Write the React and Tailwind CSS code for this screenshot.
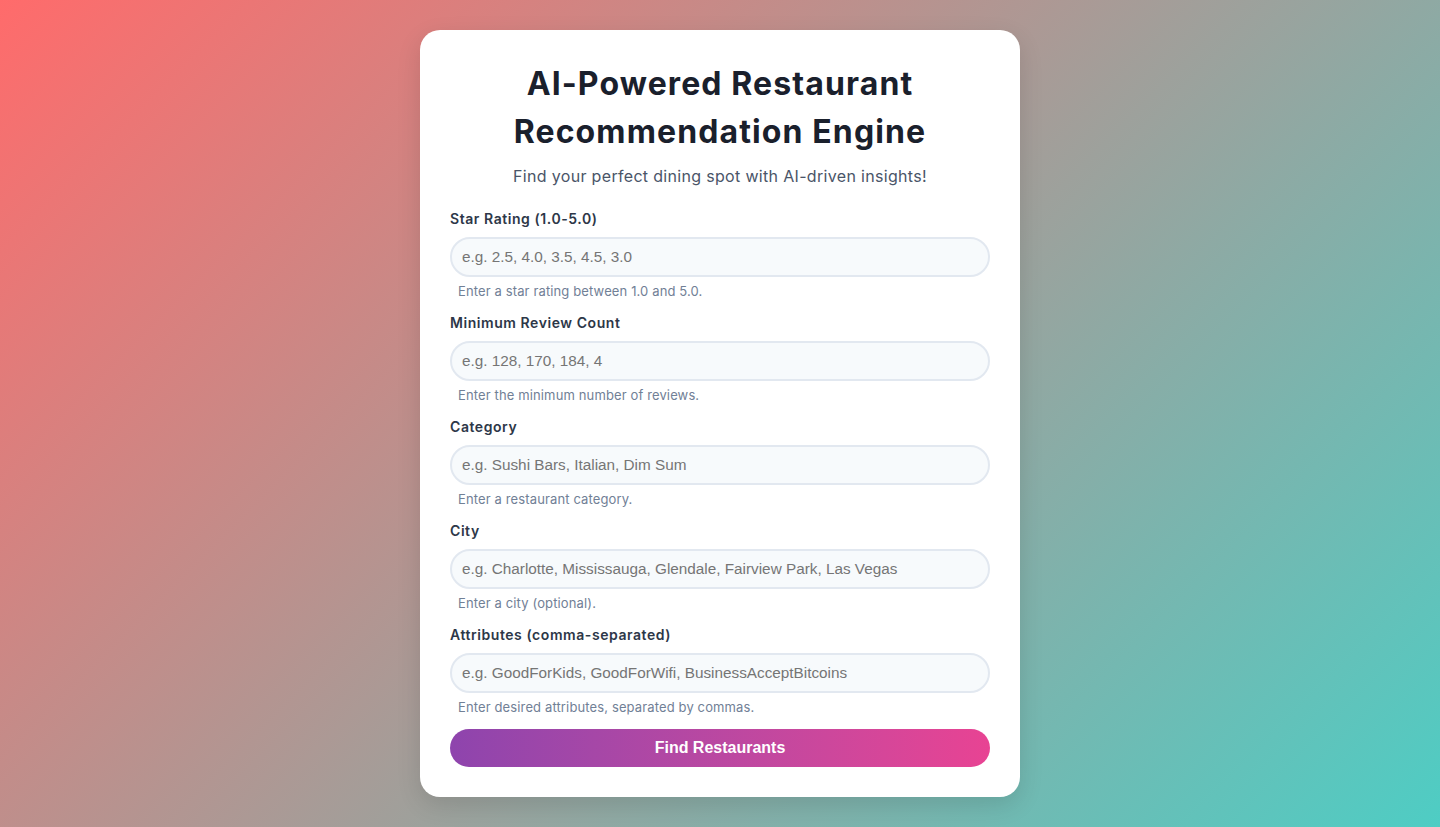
import React from 'react'

const fields = [
  { label: 'Star Rating (1.0-5.0)', placeholder: 'e.g. 2.5, 4.0, 3.5, 4.5, 3.0', help: 'Enter a star rating between 1.0 and 5.0.' },
  { label: 'Minimum Review Count', placeholder: 'e.g. 128, 170, 184, 4', help: 'Enter the minimum number of reviews.' },
  { label: 'Category', placeholder: 'e.g. Sushi Bars, Italian, Dim Sum', help: 'Enter a restaurant category.' },
  { label: 'City', placeholder: 'e.g. Charlotte, Mississauga, Glendale, Fairview Park, Las Vegas', help: 'Enter a city (optional).' },
  { label: 'Attributes (comma-separated)', placeholder: 'e.g. GoodForKids, GoodForWifi, BusinessAcceptBitcoins', help: 'Enter desired attributes, separated by commas.' },
]

const App = () => {
  return (
    <div className="min-h-screen bg-[linear-gradient(135deg,#ff6b6b,#4ecdc4)] flex justify-center py-[30px] font-[family-name:Inter,sans-serif]">
      <div className="w-[600px] bg-white rounded-[20px] shadow-[0_8px_24px_rgba(0,0,0,0.12)] p-[30px]">
        {/* Header */}
        <h1 className="text-center text-[32px] leading-[48px] font-bold tracking-[0.035em] text-[#1a202c] mb-2">
          AI-Powered Restaurant<br />Recommendation Engine
        </h1>
        <p className="text-center text-[16px] leading-6 tracking-[0.02em] text-[#4a5568] mb-[20px]">
          Find your perfect dining spot with AI-driven insights!
        </p>

        {/* Form */}
        <form>
          {fields.map((f) => (
            <div key={f.label} className="mb-[12px]">
              <label className="block text-[14px] leading-[21px] font-semibold tracking-[0.04em] text-[#2d3748] mb-2">{f.label}</label>
              <input
                type="text"
                placeholder={f.placeholder}
                className="w-full h-10 px-[10px] pb-[1px] rounded-full border-2 border-[#e2e8f0] bg-[#f7fafc] text-[15.3px] font-[family-name:'Liberation_Sans',Arial,sans-serif] placeholder:text-[#757575] outline-none"
              />
              <p className="mt-[6px] pl-2 text-[13px] leading-[17px] tracking-[0.01em] text-[#718096]">{f.help}</p>
            </div>
          ))}
          <button
            type="button"
            className="mt-[1px] w-full h-[38px] rounded-full bg-gradient-to-r from-[#8e44ad] to-[#e84393] text-white text-[16px] font-bold font-[family-name:'Liberation_Sans',Arial,sans-serif]"
          >
            Find Restaurants
          </button>
        </form>
      </div>
    </div>
  )
}

export default App
